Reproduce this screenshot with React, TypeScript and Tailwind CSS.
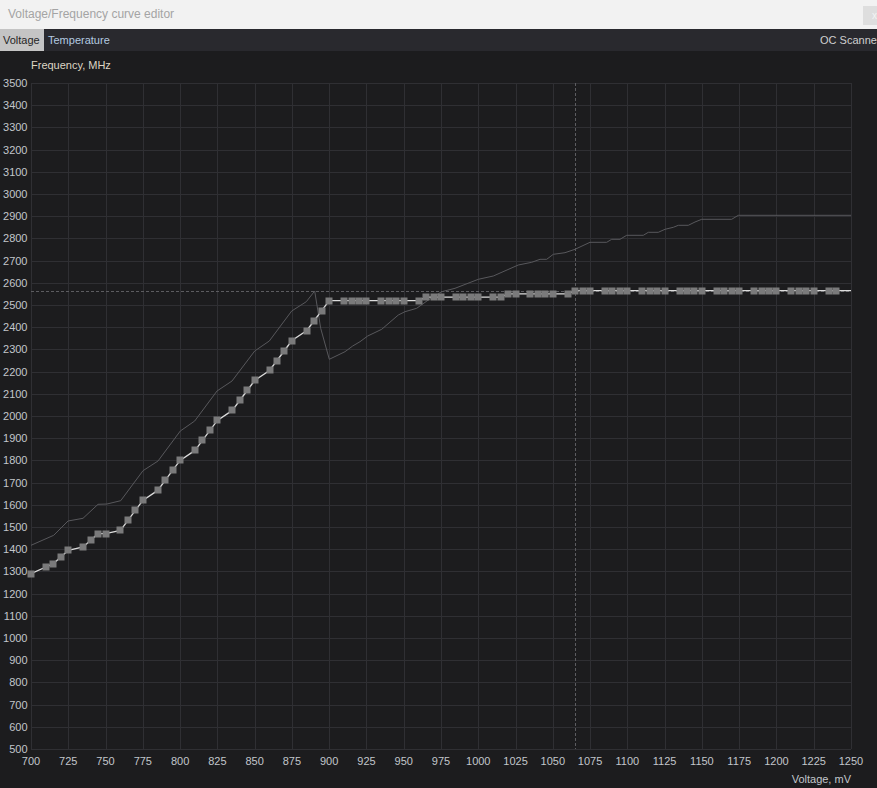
import React from 'react';

// plot geometry (screen pixels)
const LEFT = 31;
const RIGHT = 851;
const TOP = 83;
const BOTTOM = 749;

const vx = (v: number) => LEFT + ((v - 700) * (RIGHT - LEFT)) / 550;
const fy = (f: number) => TOP + ((3500 - f) * (BOTTOM - TOP)) / 3000;

// voltage points of the edited curve (every 5 mV, skipping x05 of each 25 mV step)
const buildCurve = () => {
  const early: [number, number][] = [
    [700, 1290],
    [710, 1320],
    [715, 1335],
    [720, 1365],
    [725, 1395],
    [735, 1410],
    [740, 1440],
    [745, 1470],
    [750, 1470],
    [760, 1485],
  ];
  const pts: [number, number][] = [...early];
  let f = 1530;
  for (let v = 765; v <= 1240; v += 5) {
    if (v % 25 === 5) continue;
    if (v <= 900) {
      pts.push([v, f]);
      f += 45;
    } else if (v <= 960) pts.push([v, 2520]);
    else if (v <= 1015) pts.push([v, 2535]);
    else if (v <= 1060) pts.push([v, 2550]);
    else pts.push([v, 2565]);
  }
  return pts;
};

const curve = buildCurve();

// default (reference) curve, traced in screen pixels
const refCurve: [number, number][] = [
  [31, 545.3], [53.7, 535.3], [68, 521], [83, 518.3], [98, 504.3], [107, 504],
  [120.7, 500.7], [143, 470.7], [158, 461], [180.3, 431], [194.7, 421], [217, 391],
  [232, 381], [254.7, 351], [269.3, 341], [291.7, 311], [306.3, 301.7], [314.7, 291],
  [320.7, 328.3], [329.3, 359.3], [345, 351.7], [352.7, 346], [360, 341.7], [367.7, 336],
  [381.7, 329.3], [398.3, 315], [405, 311.7], [416.7, 308.3], [428.3, 300], [441.7, 291.7],
  [455, 288.3], [478.3, 279.3], [493.3, 276], [518.3, 265], [531.7, 262.3], [540, 259.3],
  [546.7, 259.3], [553.3, 254.3], [565, 252.7], [575, 249.3], [590, 242.3], [606.7, 242.3],
  [611.7, 239.3], [620, 239.3], [626.7, 235.3], [643.3, 235.3], [648.3, 232.3], [658.3, 232.3],
  [665, 229.3], [673.3, 227.3], [678.3, 225.3], [688.3, 225.3], [695, 222], [701.7, 219.3],
  [731.7, 219.3], [738.3, 215.3], [851, 215.3],
];

const voltTicks = Array.from({ length: 23 }, (_, i) => 700 + i * 25);
const freqTicks = Array.from({ length: 31 }, (_, i) => 500 + i * 100);

const CurveChart: React.FC = () => {
  const linePts = [...curve, [1250, 2565] as [number, number]]
    .map(([v, f]) => `${vx(v).toFixed(1)},${fy(f).toFixed(1)}`)
    .join(' ');
  const refPts = refCurve.map(([x, y]) => `${x},${y}`).join(' ');
  const cx = Math.round(vx(1065)) + 0.5;
  const cy = Math.round(fy(2565)) + 0.5;

  return (
    <svg width={877} height={737} viewBox="0 51 877 737" className="block">
      <text x={31} y={68.5} fill="#ddd5c4" fontSize={11}>
        Frequency, MHz
      </text>

      {/* grid */}
      {freqTicks.map((f) => (
        <line
          key={`h${f}`}
          x1={LEFT}
          x2={RIGHT}
          y1={Math.round(fy(f)) + 0.5}
          y2={Math.round(fy(f)) + 0.5}
          stroke="#2f2f33"
        />
      ))}
      {voltTicks.map((v) => (
        <line
          key={`v${v}`}
          x1={Math.round(vx(v)) + 0.5}
          x2={Math.round(vx(v)) + 0.5}
          y1={TOP}
          y2={BOTTOM}
          stroke="#2f2f33"
        />
      ))}

      {/* axis labels */}
      {freqTicks.map((f) => (
        <text key={`fl${f}`} x={27.5} y={fy(f) + 4} fill="#c2c6cb" fontSize={11} textAnchor="end">
          {f}
        </text>
      ))}
      {voltTicks.map((v) => (
        <text key={`vl${v}`} x={vx(v)} y={765} fill="#c2c6cb" fontSize={11} textAnchor="middle">
          {v}
        </text>
      ))}
      <text x={851} y={782.5} fill="#c2c6cb" fontSize={11} textAnchor="end">
        Voltage, mV
      </text>

      {/* cursor crosshair */}
      <line x1={LEFT} x2={RIGHT} y1={cy} y2={cy} stroke="#5c5c60" strokeDasharray="3 2" />
      <line x1={cx} x2={cx} y1={TOP} y2={BOTTOM} stroke="#5c5c60" strokeDasharray="3 2" />

      {/* default curve */}
      <polyline points={refPts} fill="none" stroke="#58585c" strokeWidth={1} />

      {/* edited curve */}
      <polyline points={linePts} fill="none" stroke="#dcdcdc" strokeWidth={1.3} />
      {curve.map(([v, f]) => (
        <rect
          key={`p${v}`}
          x={Math.round(vx(v)) - 3.5}
          y={Math.round(fy(f)) - 3.5}
          width={7}
          height={7}
          fill="#7a7a7b"
        />
      ))}
    </svg>
  );
};

export default function App() {
  return (
    <div className="w-[877px] h-[788px] overflow-hidden flex flex-col bg-[#1c1c1e] font-['Liberation_Sans',Arial,sans-serif]">
      {/* title bar */}
      <div className="h-[29px] shrink-0 bg-[#f2f2f2] flex items-start">
        <span className="pl-2 pt-[7px] text-[12px] leading-[14px] text-[#a4a4a4]">
          Voltage/Frequency curve editor
        </span>
        <div className="ml-auto mt-[6px] w-[14px] h-[19px] bg-[#dedede] text-[10px] leading-[19px] text-[#f4f4f4] pl-[9px] overflow-hidden">
          x
        </div>
      </div>

      {/* tabs */}
      <div className="h-[22px] shrink-0 bg-[#29292e] flex items-stretch text-[11px]">
        <div className="w-[44px] bg-[#c4c4c4] text-[#262626] pl-[3px] flex items-center">Voltage</div>
        <div className="pl-[4px] text-[#b3c9e0] flex items-center">Temperature</div>
        <div className="ml-auto w-[57px] whitespace-nowrap text-[#cfcfcf] flex items-center">
          OC Scanner
        </div>
      </div>

      <CurveChart />
    </div>
  );
}
